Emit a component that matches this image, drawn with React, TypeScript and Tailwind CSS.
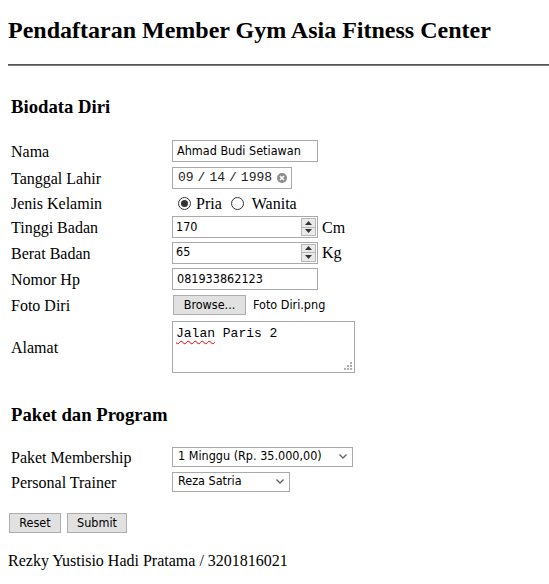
import React from 'react';

const ui = "font-['DejaVu_Sans_Condensed','Liberation_Sans',Arial,sans-serif] text-[12.5px]";

function TextBox({ value, width = 'w-[146px]' }: { value: string; width?: string }) {
  return (
    <div className={`${width} h-[22px] border border-[#a9a9a9] bg-white pl-[4px] flex items-center ${ui} text-black`}>
      {value}
    </div>
  );
}

function NumberBox({ value, unit }: { value: string; unit: string }) {
  return (
    <div className="flex items-center gap-[4px]">
      <div className={`relative w-[146px] h-[22px] border border-[#a9a9a9] bg-white pl-[3px] flex items-center ${ui} text-black`}>
        {value}
        <div className="absolute right-[1px] top-[1px] bottom-[1px] w-[15px] flex flex-col border border-[#b9b9b9] bg-[#e9e9e9]">
          <div className="flex-1 flex items-center justify-center border-b border-[#b9b9b9]">
            <svg width="7" height="4" viewBox="0 0 7 4"><path d="M0 4 L3.5 0 L7 4 Z" fill="#333" /></svg>
          </div>
          <div className="flex-1 flex items-center justify-center">
            <svg width="7" height="4" viewBox="0 0 7 4"><path d="M0 0 L3.5 4 L7 0 Z" fill="#333" /></svg>
          </div>
        </div>
      </div>
      <span className="pt-[1px]">{unit}</span>
    </div>
  );
}

function Radio({ checked }: { checked?: boolean }) {
  return (
    <span className="w-[13px] h-[13px] rounded-full border border-[#333] bg-white flex items-center justify-center">
      {checked && <span className="w-[7px] h-[7px] rounded-full bg-[#333]" />}
    </span>
  );
}

function Select({ value, width }: { value: string; width: string }) {
  return (
    <div className={`${width} h-[20px] border border-[#a9a9a9] bg-white pl-[5px] pr-[5px] flex items-center justify-between ${ui} text-black`}>
      <span>{value}</span>
      <svg width="8" height="5" viewBox="0 0 8 5"><path d="M0.5 0.5 L4 4 L7.5 0.5" stroke="#666" strokeWidth="1.4" fill="none" /></svg>
    </div>
  );
}

function Btn({ label, width }: { label: string; width: string }) {
  return (
    <button className={`${width} h-[20px] border border-[#adadad] bg-[#e1e1e1] ${ui} text-black flex items-center justify-center`}>
      {label}
    </button>
  );
}

function Row({ label, h, children }: { label: string; h: string; children: React.ReactNode }) {
  return (
    <div className={`flex items-center ${h}`}>
      <span className="w-[161px] pt-[2px] leading-[18px]">{label}</span>
      {children}
    </div>
  );
}

export default function App() {
  return (
    <div className="min-h-[584px] bg-white pl-2 font-['Liberation_Serif','Times_New_Roman',serif] text-[16px] text-black">
      <h2 className="pt-[16px] text-[24px] leading-[28px] font-bold">Pendaftaran Member Gym Asia Fitness Center</h2>
      <div className="mt-[20px] h-[2px] border-t border-[#555] bg-[#7a7a7a]" />

      <div className="pl-[3px]">
        <h3 className="mt-[30px] text-[18.72px] leading-[22px] font-bold">Biodata Diri</h3>

        <div className="mt-[20px] flex flex-col">
          <Row label="Nama" h="h-[26px]">
            <TextBox value="Ahmad Budi Setiawan" />
          </Row>
          <Row label="Tanggal Lahir" h="h-[27px]">
            <div className="w-[120px] h-[22px] border border-[#a9a9a9] bg-white pl-[5px] flex items-center font-['Liberation_Mono',monospace] text-[13px] text-[#222]">
              <div className="flex items-center gap-[4px]">
                <span>09</span>
                <span>/</span>
                <span>14</span>
                <span>/</span>
                <span>1998</span>
              </div>
              <svg className="ml-[5px]" width="10" height="10" viewBox="0 0 10 10">
                <circle cx="5" cy="5" r="5" fill="#8c8c8c" />
                <path d="M3 3 L7 7 M7 3 L3 7" stroke="#fff" strokeWidth="1.5" />
              </svg>
            </div>
          </Row>
          <Row label="Jenis Kelamin" h="h-[24px]">
            <div className="flex items-center pl-[6px]">
              <Radio checked />
              <span className="ml-[5px] pt-[2px] leading-[18px]">Pria</span>
              <span className="ml-[9px]"><Radio /></span>
              <span className="ml-[8px] pt-[2px] leading-[18px]">Wanita</span>
            </div>
          </Row>
          <Row label="Tinggi Badan" h="h-[24px]">
            <NumberBox value="170" unit="Cm" />
          </Row>
          <Row label="Berat Badan" h="h-[27px]">
            <NumberBox value="65" unit="Kg" />
          </Row>
          <Row label="Nomor Hp" h="h-[26px]">
            <TextBox value="081933862123" />
          </Row>
          <Row label="Foto Diri" h="h-[26px]">
            <div className={`flex items-center gap-[7px] pl-[1px] ${ui}`}>
              <span className="w-[73px] h-[20px] border border-[#adadad] bg-[#e1e1e1] flex items-center justify-center">Browse...</span>
              <span>Foto Diri.png</span>
            </div>
          </Row>
          <Row label="Alamat" h="h-[58px]">
            <div className="relative w-[183px] h-[52px] border border-[#a9a9a9] bg-white pl-[3px] pt-[4px] font-['Liberation_Mono',monospace] text-[13px] leading-[15px] text-black">
              <span className="underline decoration-wavy decoration-[#e00] decoration-1 underline-offset-[3px]">Jalan</span> Paris 2
              <svg className="absolute right-[2px] bottom-[2px]" width="8" height="8" viewBox="0 0 8 8">
                <rect x="6" y="0" width="2" height="2" fill="#b0b0b0" />
                <rect x="3" y="3" width="2" height="2" fill="#b0b0b0" />
                <rect x="6" y="3" width="2" height="2" fill="#b0b0b0" />
                <rect x="0" y="6" width="2" height="2" fill="#b0b0b0" />
                <rect x="3" y="6" width="2" height="2" fill="#b0b0b0" />
                <rect x="6" y="6" width="2" height="2" fill="#b0b0b0" />
              </svg>
            </div>
          </Row>
        </div>

        <h3 className="mt-[28px] text-[18.72px] leading-[22px] font-bold">Paket dan Program</h3>

        <div className="mt-[18px] flex flex-col">
          <Row label="Paket Membership" h="h-[25px]">
            <Select value="1 Minggu (Rp. 35.000,00)" width="w-[181px]" />
          </Row>
          <Row label="Personal Trainer" h="h-[25px]">
            <Select value="Reza Satria" width="w-[118px]" />
          </Row>
        </div>
      </div>

      <div className="mt-[19px] pl-[1px] flex gap-[6px]">
        <Btn label="Reset" width="w-[52px]" />
        <Btn label="Submit" width="w-[60px]" />
      </div>

      <p className="mt-[19px] leading-[18px]">Rezky Yustisio Hadi Pratama / 3201816021</p>
    </div>
  );
}
